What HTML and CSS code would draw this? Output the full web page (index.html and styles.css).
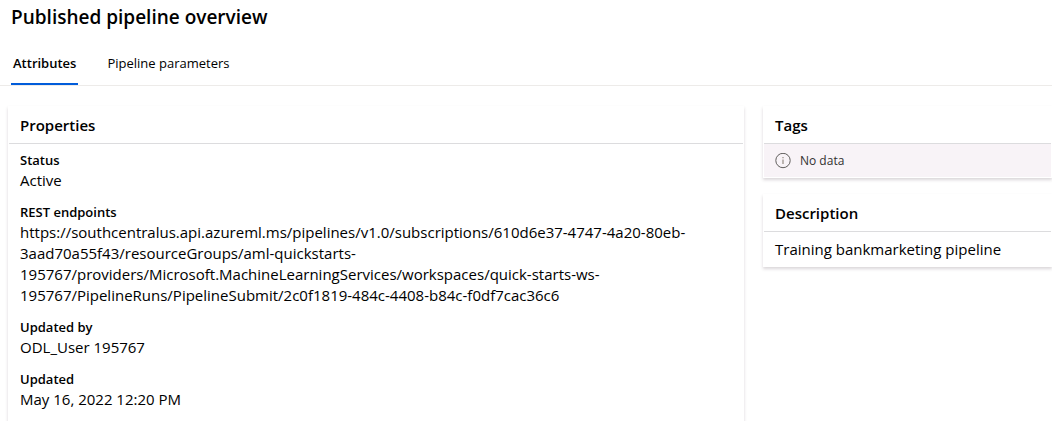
FILE: index.html
```html
<!DOCTYPE html>
<html lang="en">
<head>
<meta charset="utf-8">
<meta name="viewport" content="width=device-width, initial-scale=1">
<title>Published pipeline overview</title>
<link rel="stylesheet" href="styles.css">
</head>
<body>
<h1 class="page-title">Published pipeline overview</h1>
<div class="tabs" role="tablist">
  <button class="tab tab-active" type="button" role="tab" aria-selected="true">Attributes</button>
  <button class="tab" type="button" role="tab" aria-selected="false">Pipeline parameters</button>
</div>
<main class="content">
  <section class="card card-main">
    <h2 class="card-title">Properties</h2>
    <dl class="properties">
      <div class="property"><dt>Status</dt><dd>Active</dd></div>
      <div class="property"><dt>REST endpoints</dt><dd>https://southcentralus.api.azureml.ms/pipelines/v1.0/subscriptions/610d6e37-4747-4a20-80eb-<wbr>3aad70a55f43/resourceGroups/aml-quickstarts-<wbr>195767/providers/Microsoft.MachineLearningServices/workspaces/quick-starts-ws-<wbr>195767/PipelineRuns/PipelineSubmit/2c0f1819-484c-4408-b84c-f0df7cac36c6</dd></div>
      <div class="property"><dt>Updated by</dt><dd>ODL_User 195767</dd></div>
      <div class="property"><dt>Updated</dt><dd>May 16, 2022 12:20 PM</dd></div>
    </dl>
  </section>
  <div class="side">
    <section class="card">
      <h2 class="card-title">Tags</h2>
      <div class="notice">
        <svg class="notice-icon" viewBox="0 0 16 16" aria-hidden="true">
          <circle cx="8" cy="7.5" r="7.2" fill="none" stroke="#605e5c"/>
          <path d="M8 6.5v4.5M8 4v1.2" fill="none" stroke="#8a8178" stroke-width="1.1"/>
        </svg>
        <span>No data</span>
      </div>
    </section>
    <section class="card">
      <h2 class="card-title">Description</h2>
      <p class="description">Training bankmarketing pipeline</p>
    </section>
  </div>
</main>
</body>
</html>
```

FILE: styles.css
```css
* {
  box-sizing: border-box;
}

body {
  display: flex;
  flex-direction: column;
  height: 100vh;
  margin: 0;
  overflow: hidden;
  background: #fff;
  color: #000;
  font-family: "Segoe UI", "Open Sans", "Noto Sans", sans-serif;
  font-size: 15px;
  line-height: 21px;
}

.page-title {
  margin: 0;
  padding: 4px 11px 12px;
  font-size: 19px;
  font-weight: 600;
  line-height: 26px;
}

.tabs {
  display: flex;
  gap: 27px;
  padding: 0 11px;
  border-bottom: 1px solid #edebe9;
}

.tab {
  height: 43px;
  padding: 0 2px;
  border: 0;
  border-bottom: 2px solid transparent;
  background: none;
  color: #000;
  font: 13px/20px "Segoe UI", "Open Sans", "Noto Sans", sans-serif;
}

.tab-active {
  border-bottom-color: #015cda;
  font-weight: 600;
}

.content {
  display: grid;
  flex: 1;
  grid-template-columns: minmax(0, 736fr) minmax(0, 289fr);
  gap: 19px;
  padding: 20px 0 0 8px;
}

.card {
  padding: 0 1px;
  background: #fff;
  box-shadow: 0 2px 3px rgba(50, 30, 45, 0.18);
}

.card-main {
  padding-bottom: 24px;
}

.card-title {
  margin: 0;
  padding: 9px 11px 7px;
  border-bottom: 1px solid #dcdcde;
  font-size: 15px;
  font-weight: 600;
  line-height: 21px;
}

.properties {
  display: flex;
  flex-direction: column;
  gap: 12px;
  margin: 0;
  padding: 7px 11px;
}

.property dt {
  font-size: 13px;
  font-weight: 600;
  line-height: 19px;
}

.property dd {
  margin: 0;
}

.side {
  display: flex;
  flex-direction: column;
  gap: 16px;
}

.notice {
  display: flex;
  align-items: center;
  gap: 9px;
  padding: 6px 11px;
  border-bottom: 1px solid #fff;
  background: #f8f3f7;
  color: #323130;
  font-size: 12px;
}

.notice-icon {
  width: 16px;
  height: 16px;
}

.description {
  margin: 0;
  padding: 7px 11px;
}
```
